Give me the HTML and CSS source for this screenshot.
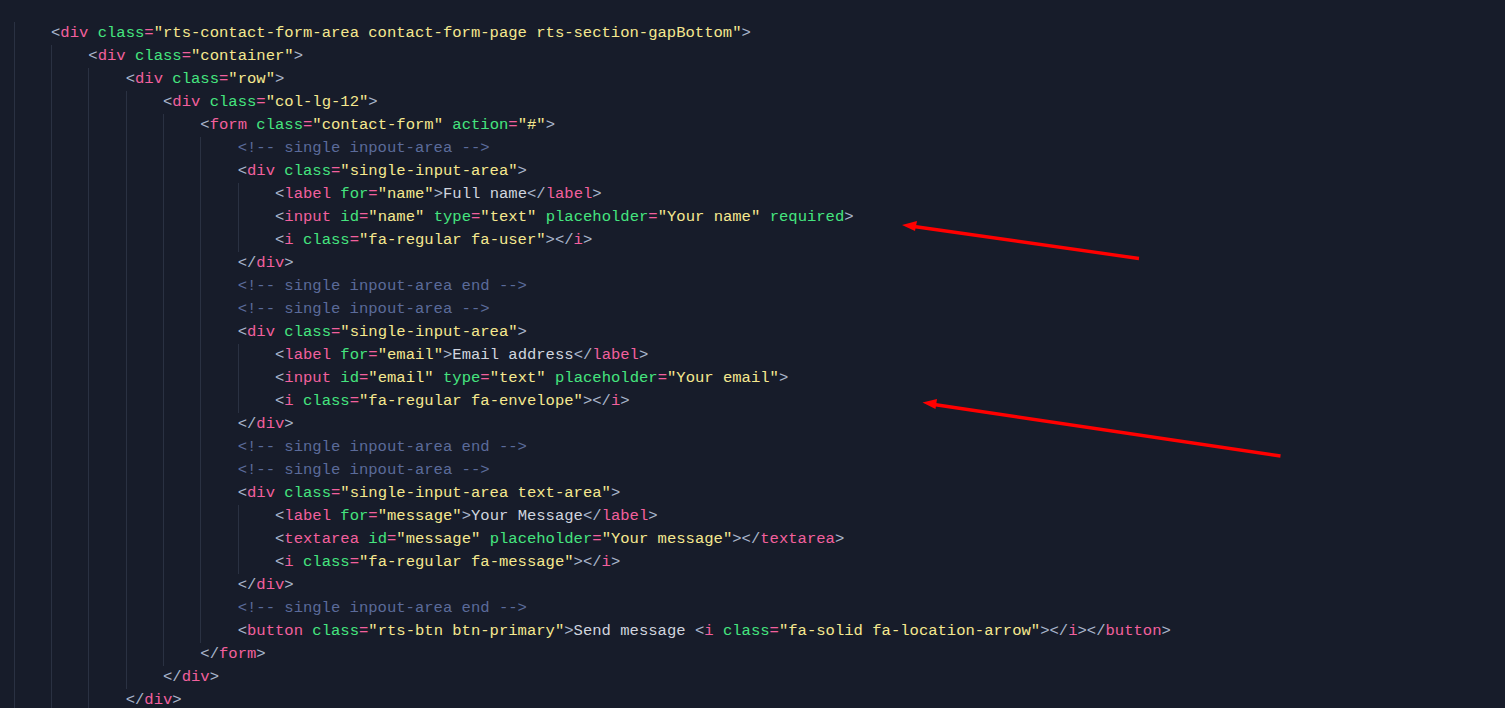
FILE: index.html
```html
<!DOCTYPE html>
<html lang="en">
<head>
<meta charset="utf-8">
<title>contact form code</title>
<link rel="stylesheet" href="styles.css">
</head>
<body>
<div class="editor">
<div class="line"><span class="ind"></span><span class="b">&lt;</span><span class="t">div</span> <span class="a">class</span><span class="e">=</span><span class="s">"rts-contact-form-area contact-form-page rts-section-gapBottom"</span><span class="b">&gt;</span></div>
<div class="line"><span class="ind"></span><span class="ind"></span><span class="b">&lt;</span><span class="t">div</span> <span class="a">class</span><span class="e">=</span><span class="s">"container"</span><span class="b">&gt;</span></div>
<div class="line"><span class="ind"></span><span class="ind"></span><span class="ind"></span><span class="b">&lt;</span><span class="t">div</span> <span class="a">class</span><span class="e">=</span><span class="s">"row"</span><span class="b">&gt;</span></div>
<div class="line"><span class="ind"></span><span class="ind"></span><span class="ind"></span><span class="ind"></span><span class="b">&lt;</span><span class="t">div</span> <span class="a">class</span><span class="e">=</span><span class="s">"col-lg-12"</span><span class="b">&gt;</span></div>
<div class="line"><span class="ind"></span><span class="ind"></span><span class="ind"></span><span class="ind"></span><span class="ind"></span><span class="b">&lt;</span><span class="t">form</span> <span class="a">class</span><span class="e">=</span><span class="s">"contact-form"</span> <span class="a">action</span><span class="e">=</span><span class="s">"#"</span><span class="b">&gt;</span></div>
<div class="line"><span class="ind"></span><span class="ind"></span><span class="ind"></span><span class="ind"></span><span class="ind"></span><span class="ind"></span><span class="c">&lt;!-- single inpout-area --&gt;</span></div>
<div class="line"><span class="ind"></span><span class="ind"></span><span class="ind"></span><span class="ind"></span><span class="ind"></span><span class="ind"></span><span class="b">&lt;</span><span class="t">div</span> <span class="a">class</span><span class="e">=</span><span class="s">"single-input-area"</span><span class="b">&gt;</span></div>
<div class="line"><span class="ind"></span><span class="ind"></span><span class="ind"></span><span class="ind"></span><span class="ind"></span><span class="ind"></span><span class="ind"></span><span class="b">&lt;</span><span class="t">label</span> <span class="a">for</span><span class="e">=</span><span class="s">"name"</span><span class="b">&gt;</span><span class="x">Full name</span><span class="b">&lt;/</span><span class="t">label</span><span class="b">&gt;</span></div>
<div class="line"><span class="ind"></span><span class="ind"></span><span class="ind"></span><span class="ind"></span><span class="ind"></span><span class="ind"></span><span class="ind"></span><span class="b">&lt;</span><span class="t">input</span> <span class="a">id</span><span class="e">=</span><span class="s">"name"</span> <span class="a">type</span><span class="e">=</span><span class="s">"text"</span> <span class="a">placeholder</span><span class="e">=</span><span class="s">"Your name"</span> <span class="a">required</span><span class="b">&gt;</span></div>
<div class="line"><span class="ind"></span><span class="ind"></span><span class="ind"></span><span class="ind"></span><span class="ind"></span><span class="ind"></span><span class="ind"></span><span class="b">&lt;</span><span class="t">i</span> <span class="a">class</span><span class="e">=</span><span class="s">"fa-regular fa-user"</span><span class="b">&gt;&lt;/</span><span class="t">i</span><span class="b">&gt;</span></div>
<div class="line"><span class="ind"></span><span class="ind"></span><span class="ind"></span><span class="ind"></span><span class="ind"></span><span class="ind"></span><span class="b">&lt;/</span><span class="t">div</span><span class="b">&gt;</span></div>
<div class="line"><span class="ind"></span><span class="ind"></span><span class="ind"></span><span class="ind"></span><span class="ind"></span><span class="ind"></span><span class="c">&lt;!-- single inpout-area end --&gt;</span></div>
<div class="line"><span class="ind"></span><span class="ind"></span><span class="ind"></span><span class="ind"></span><span class="ind"></span><span class="ind"></span><span class="c">&lt;!-- single inpout-area --&gt;</span></div>
<div class="line"><span class="ind"></span><span class="ind"></span><span class="ind"></span><span class="ind"></span><span class="ind"></span><span class="ind"></span><span class="b">&lt;</span><span class="t">div</span> <span class="a">class</span><span class="e">=</span><span class="s">"single-input-area"</span><span class="b">&gt;</span></div>
<div class="line"><span class="ind"></span><span class="ind"></span><span class="ind"></span><span class="ind"></span><span class="ind"></span><span class="ind"></span><span class="ind"></span><span class="b">&lt;</span><span class="t">label</span> <span class="a">for</span><span class="e">=</span><span class="s">"email"</span><span class="b">&gt;</span><span class="x">Email address</span><span class="b">&lt;/</span><span class="t">label</span><span class="b">&gt;</span></div>
<div class="line"><span class="ind"></span><span class="ind"></span><span class="ind"></span><span class="ind"></span><span class="ind"></span><span class="ind"></span><span class="ind"></span><span class="b">&lt;</span><span class="t">input</span> <span class="a">id</span><span class="e">=</span><span class="s">"email"</span> <span class="a">type</span><span class="e">=</span><span class="s">"text"</span> <span class="a">placeholder</span><span class="e">=</span><span class="s">"Your email"</span><span class="b">&gt;</span></div>
<div class="line"><span class="ind"></span><span class="ind"></span><span class="ind"></span><span class="ind"></span><span class="ind"></span><span class="ind"></span><span class="ind"></span><span class="b">&lt;</span><span class="t">i</span> <span class="a">class</span><span class="e">=</span><span class="s">"fa-regular fa-envelope"</span><span class="b">&gt;&lt;/</span><span class="t">i</span><span class="b">&gt;</span></div>
<div class="line"><span class="ind"></span><span class="ind"></span><span class="ind"></span><span class="ind"></span><span class="ind"></span><span class="ind"></span><span class="b">&lt;/</span><span class="t">div</span><span class="b">&gt;</span></div>
<div class="line"><span class="ind"></span><span class="ind"></span><span class="ind"></span><span class="ind"></span><span class="ind"></span><span class="ind"></span><span class="c">&lt;!-- single inpout-area end --&gt;</span></div>
<div class="line"><span class="ind"></span><span class="ind"></span><span class="ind"></span><span class="ind"></span><span class="ind"></span><span class="ind"></span><span class="c">&lt;!-- single inpout-area --&gt;</span></div>
<div class="line"><span class="ind"></span><span class="ind"></span><span class="ind"></span><span class="ind"></span><span class="ind"></span><span class="ind"></span><span class="b">&lt;</span><span class="t">div</span> <span class="a">class</span><span class="e">=</span><span class="s">"single-input-area text-area"</span><span class="b">&gt;</span></div>
<div class="line"><span class="ind"></span><span class="ind"></span><span class="ind"></span><span class="ind"></span><span class="ind"></span><span class="ind"></span><span class="ind"></span><span class="b">&lt;</span><span class="t">label</span> <span class="a">for</span><span class="e">=</span><span class="s">"message"</span><span class="b">&gt;</span><span class="x">Your Message</span><span class="b">&lt;/</span><span class="t">label</span><span class="b">&gt;</span></div>
<div class="line"><span class="ind"></span><span class="ind"></span><span class="ind"></span><span class="ind"></span><span class="ind"></span><span class="ind"></span><span class="ind"></span><span class="b">&lt;</span><span class="t">textarea</span> <span class="a">id</span><span class="e">=</span><span class="s">"message"</span> <span class="a">placeholder</span><span class="e">=</span><span class="s">"Your message"</span><span class="b">&gt;&lt;/</span><span class="t">textarea</span><span class="b">&gt;</span></div>
<div class="line"><span class="ind"></span><span class="ind"></span><span class="ind"></span><span class="ind"></span><span class="ind"></span><span class="ind"></span><span class="ind"></span><span class="b">&lt;</span><span class="t">i</span> <span class="a">class</span><span class="e">=</span><span class="s">"fa-regular fa-message"</span><span class="b">&gt;&lt;/</span><span class="t">i</span><span class="b">&gt;</span></div>
<div class="line"><span class="ind"></span><span class="ind"></span><span class="ind"></span><span class="ind"></span><span class="ind"></span><span class="ind"></span><span class="b">&lt;/</span><span class="t">div</span><span class="b">&gt;</span></div>
<div class="line"><span class="ind"></span><span class="ind"></span><span class="ind"></span><span class="ind"></span><span class="ind"></span><span class="ind"></span><span class="c">&lt;!-- single inpout-area end --&gt;</span></div>
<div class="line"><span class="ind"></span><span class="ind"></span><span class="ind"></span><span class="ind"></span><span class="ind"></span><span class="ind"></span><span class="b">&lt;</span><span class="t">button</span> <span class="a">class</span><span class="e">=</span><span class="s">"rts-btn btn-primary"</span><span class="b">&gt;</span><span class="x">Send message </span><span class="b">&lt;</span><span class="t">i</span> <span class="a">class</span><span class="e">=</span><span class="s">"fa-solid fa-location-arrow"</span><span class="b">&gt;&lt;/</span><span class="t">i</span><span class="b">&gt;&lt;/</span><span class="t">button</span><span class="b">&gt;</span></div>
<div class="line"><span class="ind"></span><span class="ind"></span><span class="ind"></span><span class="ind"></span><span class="ind"></span><span class="b">&lt;/</span><span class="t">form</span><span class="b">&gt;</span></div>
<div class="line"><span class="ind"></span><span class="ind"></span><span class="ind"></span><span class="ind"></span><span class="b">&lt;/</span><span class="t">div</span><span class="b">&gt;</span></div>
<div class="line"><span class="ind"></span><span class="ind"></span><span class="ind"></span><span class="b">&lt;/</span><span class="t">div</span><span class="b">&gt;</span></div>
</div>
<svg class="arrows" width="1505" height="708" viewBox="0 0 1505 708" aria-hidden="true">
  <line x1="1139" y1="258.5" x2="914" y2="226.5" stroke="#ff0000" stroke-width="3.4" stroke-linecap="butt"/>
  <polygon points="902,225 917,221 915,231" fill="#ff0000"/>
  <line x1="1280.5" y1="456" x2="934" y2="404.5" stroke="#ff0000" stroke-width="3.4" stroke-linecap="butt"/>
  <polygon points="922.5,402.5 937,399 935.5,409" fill="#ff0000"/>
</svg>
</body>
</html>
```
FILE: styles.css
```css
html, body {
  margin: 0;
  padding: 0;
  background: #171c2a;
  height: 100%;
  overflow: hidden;
}

.editor {
  padding: 22px 0 0 13.7px;
  font-family: "Liberation Mono", "DejaVu Sans Mono", monospace;
  font-size: 15.55px;
  line-height: 23px;
  color: #c9ced8;
}

.line {
  height: 23px;
  white-space: pre;
}

.ind {
  display: inline-block;
  vertical-align: top;
  width: 37.33px;
  height: 23px;
  box-sizing: border-box;
  border-left: 1px solid #2a3142;
}

.b { color: #a9b5ca; }
.t { color: #f2609d; }
.a { color: #45e47f; }
.e { color: #f2609d; }
.s { color: #f5e88f; }
.x { color: #d0d5df; }
.c { color: #5b6b9a; }

.arrows {
  position: absolute;
  left: 0;
  top: 0;
  pointer-events: none;
}
```
